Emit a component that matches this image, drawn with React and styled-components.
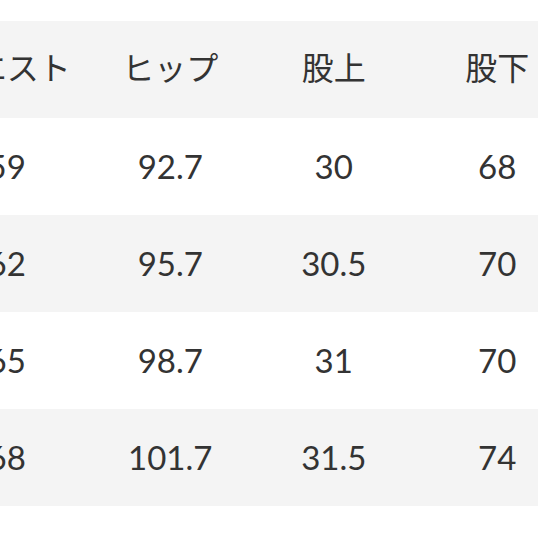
import React from "react";
import styled, { createGlobalStyle } from "styled-components";

const Global = createGlobalStyle`
  html, body { margin: 0; padding: 0; background: #ffffff; overflow: hidden; }
  body { font-family: Lato, "Noto Sans CJK JP", sans-serif; }
`;

const Page = styled.div`
  width: 538px;
  height: 538px;
  overflow: hidden;
  padding-top: 21px;
  box-sizing: border-box;
`;

const Table = styled.div`
  margin-left: -75px;
  width: 818px;
  display: flex;
  flex-direction: column;
`;

const Row = styled.div`
  display: grid;
  grid-template-columns: repeat(5, 163.5px);
  height: 97px;
  align-items: center;
  background: ${(p) => (p.$shaded ? "#f4f4f4" : "#ffffff")};
`;

const Cell = styled.div`
  text-align: center;
  font-size: ${(p) => (p.$head ? "32px" : "33px")};
  color: #333333;
  font-weight: 400;
  white-space: nowrap;
  line-height: 1;
  margin-top: ${(p) => (p.$head ? "-3px" : "0")};
`;

const head = ["ウエスト", "ヒップ", "股上", "股下", "裾幅"];
const rows = [
  ["59", "92.7", "30", "68", "17"],
  ["62", "95.7", "30.5", "70", "17.5"],
  ["65", "98.7", "31", "70", "18"],
  ["68", "101.7", "31.5", "74", "18.5"],
];

export default function App() {
  return (
    <Page>
      <Global />
      <Table>
        <Row $shaded>
          {head.map((h) => (
            <Cell key={h} $head>{h}</Cell>
          ))}
        </Row>
        {rows.map((r, i) => (
          <Row key={i} $shaded={i % 2 === 1}>
            {r.map((c, j) => (
              <Cell key={j}>{c}</Cell>
            ))}
          </Row>
        ))}
      </Table>
    </Page>
  );
}
